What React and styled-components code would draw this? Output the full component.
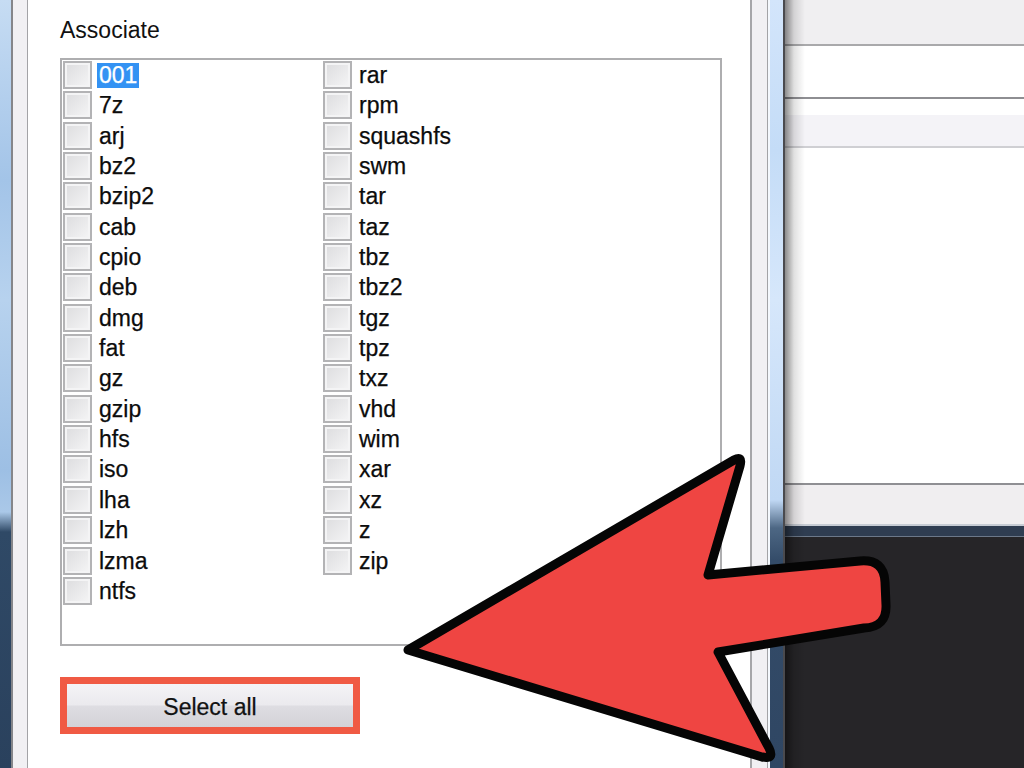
import styled, { createGlobalStyle } from "styled-components"

const Global = createGlobalStyle`
  html, body {
    margin: 0;
    padding: 0;
    background: #262528;
    overflow: hidden;
  }
  * { box-sizing: border-box; }
`

const Screen = styled.div`
  position: relative;
  display: flex;
  width: 1024px;
  height: 768px;
  overflow: hidden;
  font-family: "Liberation Sans", Arial, sans-serif;
`

const DesktopEdge = styled.div`
  width: 11px;
  flex: none;
  background: linear-gradient(
    #c6dcf3 0,
    #a3c4e8 180px,
    #b7d2ee 300px,
    #9dbfe4 470px,
    #aac8e8 512px,
    #2f4966 532px,
    #2a415d 100%
  );
`

const SideFrame = styled.div`
  width: ${(p) => p.$width}px;
  flex: none;
  background: #f1f0f3;
  border-left: 2px solid ${(p) => p.$outer};
  border-right: 1px solid #a3a3a6;
`

const AeroStrip = styled.div`
  width: 15px;
  flex: none;
  border-left: 2px solid #f4f8fd;
  background: linear-gradient(
    #d3e5fb 0,
    #c4dcf7 150px,
    #d6e7fb 300px,
    #c0d8f4 500px,
    #4d6784 528px,
    #344c69 560px,
    #2f4663 100%
  );
`

const Dialog = styled.div`
  width: 722px;
  flex: none;
  background: #ffffff;
  padding: 17px 0 0 32px;
  display: flex;
  flex-direction: column;
`

const Caption = styled.div`
  font-size: 23px;
  line-height: 26px;
  color: #111111;
  margin-bottom: 15px;
`

const ListBox = styled.div`
  width: 662px;
  height: 588px;
  border: 2px solid #aeaeb0;
  padding: 0 0 0 1px;
  display: grid;
  grid-auto-flow: column;
  grid-template-rows: repeat(18, 30.35px);
  grid-template-columns: 260px 260px;
  align-content: start;
`

const Item = styled.div`
  display: flex;
  align-items: flex-start;
  gap: 5px;
`

const Box = styled.span`
  width: 29px;
  height: 28px;
  flex: none;
  margin-top: 1px;
  border: 2px solid #b3b3b5;
  background: linear-gradient(135deg, #dcdcde, #f5f5f6);
  box-shadow: inset 0 0 0 2px #f4f4f5;
`

const Label = styled.span`
  font-size: 23px;
  line-height: 25px;
  margin-top: 3px;
  padding: 0 2px;
  color: ${(p) => (p.$selected ? "#ffffff" : "#0c0c0c")};
  background: ${(p) => (p.$selected ? "#3392f3" : "transparent")};
  -webkit-text-stroke: 0.25px ${(p) => (p.$selected ? "#ffffff" : "#0c0c0c")};
`

const Marker = styled.div`
  margin-top: 31px;
  width: 300px;
  height: 57px;
  border: 7px solid #f05a44;
`

const Button = styled.div`
  height: 100%;
  padding-top: 3px;
  display: flex;
  align-items: center;
  justify-content: center;
  font-size: 23px;
  color: #121212;
  -webkit-text-stroke: 0.25px #121212;
  background: linear-gradient(#f4f3f6 0, #ebeaee 48%, #dedde2 52%, #d3d2d7 100%);
`

const BackWindow = styled.div`
  position: relative;
  flex: 1;
  display: flex;
  flex-direction: column;
  border-left: 2px solid #4a4a4e;
  &::after {
    content: "";
    position: absolute;
    inset: 0;
    pointer-events: none;
    background: linear-gradient(90deg, rgba(0, 0, 0, 0.45), rgba(0, 0, 0, 0.12) 9px, rgba(0, 0, 0, 0) 20px);
  }
`

const Band = styled.div`
  height: ${(p) => p.$h}px;
  flex: none;
  background: ${(p) => p.$bg};
  border-bottom: ${(p) => (p.$line ? `2px solid ${p.$line}` : "none")};
`

const Taskbar = styled.div`
  flex: 1;
  background: #262528;
  border-top: 2px solid #c7ccd4;
  &::before {
    content: "";
    display: block;
    height: 10px;
    background: #2f3d51;
    border-bottom: 1px solid #6c7889;
  }
`

const Overlay = styled.svg`
  position: absolute;
  left: 0;
  top: 0;
  pointer-events: none;
`

const left = ["001", "7z", "arj", "bz2", "bzip2", "cab", "cpio", "deb", "dmg", "fat", "gz", "gzip", "hfs", "iso", "lha", "lzh", "lzma", "ntfs"]
const right = ["rar", "rpm", "squashfs", "swm", "tar", "taz", "tbz", "tbz2", "tgz", "tpz", "txz", "vhd", "wim", "xar", "xz", "z", "zip"]

function Arrow() {
  return (
    <Overlay width="1024" height="768" viewBox="0 0 1024 768">
      <path
        d="M408 650 L734 460 Q743 455 740 466 L708 575 L860 561 Q884 559 885 582 L886 605 Q887 627 864 628 L718 652 L769 748 Q775 760 762 757 Z"
        fill="#ef4542"
        stroke="#050505"
        strokeWidth="9"
        strokeLinejoin="round"
      />
    </Overlay>
  )
}

export default function App() {
  return (
    <Screen>
      <Global />
      <DesktopEdge />
      <SideFrame $width={17} $outer="#85868a" />
      <Dialog>
        <Caption>Associate</Caption>
        <ListBox>
          {[...left, ...right].map((ext) => (
            <Item key={ext}>
              <Box />
              <Label $selected={ext === "001"}>{ext}</Label>
            </Item>
          ))}
        </ListBox>
        <Marker>
          <Button>Select all</Button>
        </Marker>
      </Dialog>
      <SideFrame $width={18} $outer="#a6a6a9" />
      <AeroStrip />
      <BackWindow>
        <Band $h={46} $bg="#f0eff1" $line="#a9a9ab" />
        <Band $h={53} $bg="#ffffff" $line="#8e8e92" />
        <Band $h={16} $bg="#ffffff" />
        <Band $h={33} $bg="#f4f3f7" $line="#cfcfd3" />
        <Band $h={337} $bg="#ffffff" $line="#8f8f93" />
        <Band $h={39} $bg="#f0eef0" />
        <Taskbar />
      </BackWindow>
      <Arrow />
    </Screen>
  )
}
